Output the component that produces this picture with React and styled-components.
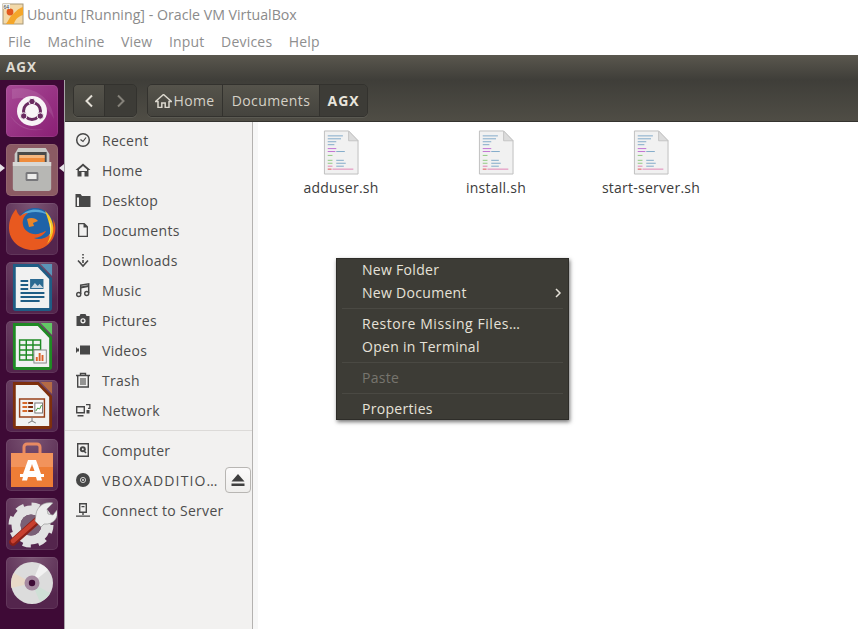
import styled, { createGlobalStyle } from "styled-components";

const Global = createGlobalStyle`
  html, body { margin: 0; padding: 0; background: #fff; }
  body { font-family: "Open Sans", "Noto Sans", sans-serif; }
  #root { width: 858px; height: 629px; overflow: hidden; }
`;

const Page = styled.div`
  width: 858px;
  height: 629px;
  display: flex;
  flex-direction: column;
  position: relative;
  overflow: hidden;
`;
const HostTitle = styled.div`
  height: 28px;
  display: flex;
  align-items: center;
  gap: 3px;
  padding-left: 2px;
  font: 14.2px "Open Sans", sans-serif;
  color: #8b8b8b;
  white-space: nowrap;
`;
const HostMenu = styled.div`
  height: 27px;
  display: flex;
  align-items: center;
  gap: 16.5px;
  padding-left: 8px;
  font: 14px "Open Sans", sans-serif;
  letter-spacing: 0.2px;
  color: #8e8e8e;
`;
const WindowBar = styled.div`
  height: 25px;
  display: flex;
  align-items: center;
  padding: 0 0 2px 6px;
  box-sizing: border-box;
  background: linear-gradient(#5a574e, #3f3e39);
  color: #dfdbd2;
  font: bold 13.5px "Open Sans", sans-serif;
  letter-spacing: 0.9px;
`;
const Body = styled.div`
  flex: 1;
  display: flex;
  min-height: 0;
`;
const Launcher = styled.div`
  width: 65px;
  flex: none;
  background: #3e0a36;
  border-right: 1px solid #a8a4a8;
  display: flex;
  flex-direction: column;
  align-items: flex-start;
  padding: 5px 0 0 6px;
  box-sizing: border-box;
  gap: 7px;
  position: relative;
`;
const Tile = styled.div`
  width: 52px;
  height: 52px;
  flex: none;
  border-radius: 5px;
  display: flex;
  align-items: center;
  justify-content: center;
  background: ${(p) => p.$bg || "radial-gradient(circle at 50% 0, #7b5574, #54254d 75%)"};
  box-shadow: inset 0 0 0 1px rgba(255, 255, 255, 0.08);
`;
const Pip = styled.div`
  position: absolute;
  top: 84px;
  width: 0;
  height: 0;
  border-top: 4px solid transparent;
  border-bottom: 4px solid transparent;
  ${(p) =>
    p.$right
      ? "left: 59px; border-right: 5px solid #e8e4e8;"
      : "left: 0; border-left: 5px solid #e8e4e8;"}
`;
const Main = styled.div`
  flex: 1;
  display: flex;
  flex-direction: column;
  min-width: 0;
`;
const Toolbar = styled.div`
  height: 42px;
  flex: none;
  box-sizing: border-box;
  display: flex;
  align-items: center;
  padding: 0 0 0 8px;
  gap: 10px;
  background: linear-gradient(#3f3e39, #4f4d45);
  border-bottom: 1px solid #34332f;
`;
const Group = styled.div`
  height: 33px;
  display: flex;
  border-radius: 5px;
  border: 1px solid #33322e;
  box-sizing: border-box;
  overflow: hidden;
  box-shadow: 0 1px 0 rgba(255, 255, 255, 0.08);
`;
const ToolButton = styled.div`
  display: flex;
  align-items: center;
  justify-content: center;
  gap: 1px;
  box-sizing: border-box;
  width: ${(p) => p.$w}px;
  color: ${(p) => (p.$active ? "#e9e5dc" : "#d5d1c7")};
  font: ${(p) => (p.$active ? "bold" : "normal")} 14px "Open Sans", sans-serif;
  letter-spacing: ${(p) => (p.$active ? "0.9px" : "0.4px")};
  background: ${(p) =>
    p.$flat ? "#3d3c37" : "linear-gradient(#55534b, #45443e)"};
  & + & {
    border-left: 1px solid #33322e;
  }
`;
const Panes = styled.div`
  flex: 1;
  display: flex;
  min-height: 0;
`;
const Sidebar = styled.div`
  width: 188px;
  flex: none;
  background: #f2f1f0;
  border-right: 1px solid #b4b2b0;
  box-sizing: border-box;
  padding-top: 3px;
`;
const SideRow = styled.div`
  height: 30px;
  display: flex;
  align-items: center;
  padding-left: 10px;
  gap: 11px;
  font: 14px "Open Sans", sans-serif;
  letter-spacing: 0.3px;
  color: #4c4c4c;
  white-space: nowrap;
`;
const WideLabel = styled.span`
  letter-spacing: 1.15px;
  margin-right: -5px;
`;
const SideDivider = styled.div`
  height: 1px;
  background: #dcdad8;
  margin: 5px 0 4px;
`;
const Eject = styled.div`
  width: 26px;
  height: 26px;
  flex: none;
  box-sizing: border-box;
  border: 1px solid #b8b6b3;
  border-radius: 4px;
  background: linear-gradient(#fbfafa, #efeeec);
  display: flex;
  align-items: center;
  justify-content: center;
`;
const Files = styled.div`
  flex: 1;
  background: #fff;
  display: flex;
  align-items: flex-start;
  padding: 8px 0 0 5.5px;
  border-left: 5px solid #f7f7f7;
`;
const FileItem = styled.div`
  width: 155px;
  display: flex;
  flex-direction: column;
  align-items: center;
  gap: 3px;
  font: 14px "Open Sans", sans-serif;
  letter-spacing: 0.25px;
  color: #3c3c3c;
`;
const ContextMenu = styled.div`
  position: absolute;
  left: 336px;
  top: 258px;
  width: 233px;
  height: 162px;
  box-sizing: border-box;
  background: #3d3c36;
  border: 1px solid #2e2d29;
  box-shadow: 1px 2px 4px rgba(0, 0, 0, 0.55);
`;
const MenuRow = styled.div`
  height: 23px;
  box-sizing: border-box;
  display: flex;
  align-items: center;
  justify-content: space-between;
  padding: 0 6px 2px 25px;
  font: 14px "Open Sans", sans-serif;
  letter-spacing: ${(p) => (p.$wide ? "0.55px" : "0.3px")};
  color: ${(p) => (p.$disabled ? "#77756e" : "#e6e2d9")};
`;
const MenuSep = styled.div`
  height: 1px;
  margin: 3px 5px 4px;
  background: #4a4943;
`;

const Glyph = ({ children, size = 16 }) => (
  <svg width={size} height={size} viewBox="0 0 16 16" fill="none" style={{ flex: "none" }}>
    {children}
  </svg>
);
const INK = "#474747";

const sideIcons = {
  recent: (
    <Glyph>
      <circle cx="8" cy="8" r="6.300" stroke={INK} strokeWidth="1.500" />
      <path d="M5.500 7.500 8 9.500l3-4" stroke={INK} strokeWidth="1.200" />
    </Glyph>
  ),
  home: (
    <Glyph>
      <path d="M8 1.500.5 8h2v6.500h4V10h3v4.500h4V8h2z" fill={INK} />
      <path d="M4 7.500 8 4l4 3.500v1.500H4z" fill="#f2f1f0" />
    </Glyph>
  ),
  desktop: (
    <Glyph>
      <path d="M.5 2h5l1.500 2h8.500v11H.5z" fill={INK} />
      <path d="M2 5.500h2V14H2z" fill="#f2f1f0" />
    </Glyph>
  ),
  documents: (
    <Glyph>
      <path d="M3 1h6.500L13 4.500V15H3z M4.300 2.300v11.400h7.400V5.500H8.500V2.300z" fill={INK} fillRule="evenodd" />
    </Glyph>
  ),
  downloads: (
    <Glyph>
      <path d="M8 2v1.500M8 5v1.500M8 8v3" stroke={INK} strokeWidth="1.600" />
      <path d="M3 8.500 8 14l5-5.500" stroke={INK} strokeWidth="1.600" />
    </Glyph>
  ),
  music: (
    <Glyph>
      <path d="M5.700 12V3.200l8-1.400V11" stroke={INK} strokeWidth="1.500" />
      <path d="M5.700 5.500l8-1.400" stroke={INK} strokeWidth="2" />
      <circle cx="3.700" cy="12.500" r="2" stroke={INK} strokeWidth="1.400" />
      <circle cx="11.700" cy="11.500" r="2" stroke={INK} strokeWidth="1.400" />
    </Glyph>
  ),
  pictures: (
    <Glyph>
      <path d="M1.500 4h3l1-2h5l1 2h3v10h-13z" fill={INK} />
      <circle cx="8" cy="8.800" r="2.600" fill="#f2f1f0" />
      <circle cx="8" cy="8.800" r="1.300" fill={INK} />
    </Glyph>
  ),
  videos: (
    <Glyph>
      <path d="M5 3.500h10v9H5zM1 5l3 3-3 3z" fill={INK} />
      <path d="M3.500 6.500v3" stroke={INK} />
    </Glyph>
  ),
  trash: (
    <Glyph>
      <path d="M1 3.500h14M5.500 3V1.500h5V3" stroke={INK} strokeWidth="1.400" />
      <path d="M2.700 4v11h10.600V4" stroke={INK} strokeWidth="1.400" />
      <path d="M6 6v7M8 6v7M10 6v7" stroke={INK} strokeWidth="1.100" />
    </Glyph>
  ),
  network: (
    <Glyph>
      <path d="M1 4h9v7.500H1z M2.400 5.400v4.700h6.200V5.400z" fill={INK} fillRule="evenodd" />
      <path d="M2.500 13h6v1.500h-6zM11 2h4.500v5H13V5.700h1.200V3.300H11zM11.500 8h3v3.500h-3z" fill={INK} />
    </Glyph>
  ),
  computer: (
    <Glyph>
      <path d="M2 1h12v14H2z M3.400 2.400v11.200h9.200V2.400z" fill={INK} fillRule="evenodd" />
      <circle cx="7.800" cy="7.300" r="3" fill={INK} />
      <path d="M8 8l3 3" stroke={INK} strokeWidth="1.600" />
      <circle cx="7.800" cy="7.300" r="1" fill="#f2f1f0" />
    </Glyph>
  ),
  disc: (
    <Glyph>
      <circle cx="8" cy="8" r="7" fill={INK} />
      <circle cx="8" cy="8" r="2.600" stroke="#f2f1f0" strokeWidth="0.800" />
      <circle cx="8" cy="8" r="0.900" fill="#f2f1f0" />
    </Glyph>
  ),
  server: (
    <Glyph>
      <path d="M4 1h8v10H4z M5.400 2.400v7.200h5.200V2.400z" fill={INK} fillRule="evenodd" />
      <path d="M6.500 4h3v1.300h-3zM7.300 11h1.400v2H7.300zM1 13.500h14v1.300H1z" fill={INK} />
    </Glyph>
  ),
};

const places = [
  ["recent", "Recent"],
  ["home", "Home"],
  ["desktop", "Desktop"],
  ["documents", "Documents"],
  ["downloads", "Downloads"],
  ["music", "Music"],
  ["pictures", "Pictures"],
  ["videos", "Videos"],
  ["trash", "Trash"],
  ["network", "Network"],
];

const VBoxLogo = () => (
  <svg width="22" height="22" viewBox="0 0 22 22" style={{ flex: "none" }}>
    <rect x="1" y="1" width="20" height="20" fill="#f3d9a8" stroke="#a89878" />
    <path d="M21 4C15 6 14 9 11 11 8 13 7 17 4 21h8c1-4 3-7 9-9z" fill="#f4a62a" />
    <circle cx="8" cy="9" r="3.400" fill="#e2581d" />
    <rect x="1" y="1" width="7" height="5" fill="#eee" />
    <text x="1.500" y="5.500" fontSize="5" fill="#444" fontFamily="Liberation Sans">64</text>
  </svg>
);

const DashIcon = () => (
  <svg width="52" height="52" viewBox="0 0 52 52">
    <path d="M6 4C24 0 46 10 48 34 40 18 24 10 6 14z" fill="#fff" opacity="0.1" />
    <path d="M4 30c6 12 20 18 34 14C24 46 12 42 4 30z" fill="#fff" opacity="0.12" />
    <circle cx="26" cy="26" r="15" fill="#f8f4f6" />
    <circle cx="26" cy="26" r="8.500" fill="none" stroke="#6a2a60" strokeWidth="3" />
    <circle cx="26" cy="16.500" r="3.200" fill="#6a2a60" stroke="#f8f4f6" />
    <circle cx="17.700" cy="31" r="3.200" fill="#6a2a60" stroke="#f8f4f6" />
    <circle cx="34.300" cy="31" r="3.200" fill="#6a2a60" stroke="#f8f4f6" />
  </svg>
);

const FilesIcon = () => (
  <svg width="42" height="46" viewBox="0 0 46 46" preserveAspectRatio="none">
    <path d="M8 1h30l4 6v34H4V7z" fill="#c9c9c6" />
    <rect x="7" y="5" width="32" height="14" fill="#4a4a48" />
    <rect x="9" y="8" width="28" height="3" fill="#f5b880" />
    <rect x="9" y="11" width="28" height="4" fill="#ef8c3c" />
    <path d="M2 15h42v26a3 3 0 0 1-3 3H5a3 3 0 0 1-3-3z" fill="#b7b7b4" />
    <path d="M2 15h42v4H2z" fill="#d8d8d5" />
    <rect x="16" y="25" width="14" height="9" rx="1.500" fill="#77777a" />
    <rect x="18" y="27" width="10" height="5" fill="#ededeb" />
  </svg>
);

const FirefoxIcon = () => (
  <svg width="50" height="50" viewBox="0 0 50 50">
    <circle cx="28" cy="22" r="18" fill="#1f63a8" />
    <path d="M14 12c6-8 20-9 27-1-8-4-18-4-27 1z" fill="#58a8d8" />
    <path d="M20 15c4-2 9-1 11 2l-5 2 1 3-5 1z" fill="#e8862a" />
    <path d="M9 5c1 3 2 5 4 7 3-2 5-3 8-3-4 3-6 7-5 12 1 6 8 10 15 9 4-1 7-3 8-3-2 4-7 7-12 7 4 2 12 1 16-4 4-5 4-11 3-15 3 5 3 12 1 17-3 8-11 14-21 14C12 46 2 36 2 24 2 16 5 10 9 5z" fill="#e8591f" />
    <path d="M38 7c7 6 9 14 8 21-1 5-3 9-6 12 3-6 4-11 3-16-1-6-3-12-5-17z" fill="#f9c623" />
    <path d="M42 16c2 6 2 12 0 17 3-5 3-12 0-17z" fill="#fff2a0" />
  </svg>
);

const DocIcon = ({ dark, light, children }) => (
  <svg width="42" height="50" viewBox="0 0 44 50" preserveAspectRatio="none">
    <path d="M2 1h27l14 14v30a3 3 0 0 1-3 3H5a3 3 0 0 1-3-3z" fill={dark} />
    <path d="M5 4h23l12 12v29H5z" fill="#f1f1f1" />
    <path d="M31 1h12v12z" fill={light} />
    {children}
  </svg>
);

const StoreIcon = () => (
  <svg width="44" height="46" viewBox="0 0 44 46">
    <path d="M14 11V5a3 3 0 0 1 3-3h10a3 3 0 0 1 3 3v6" fill="none" stroke="#e98a62" strokeWidth="3" />
    <path d="M1 11h42v34H1z" fill="#ee7d36" />
    <path d="M1 11h42v14H1z" fill="#f2935c" />
    <path d="M18 18h8l5 14H13zM22 22l-2.500 7h5z" fill="#fff" fillRule="evenodd" />
    <rect x="10" y="32" width="24" height="3" fill="#fff" />
    <path d="M13 35h5l-1 3.500h-5zM26 35h5l1 3.500h-5z" fill="#fff" />
  </svg>
);

const ToolsIcon = () => (
  <svg width="50" height="50" viewBox="0 0 50 50">
    <circle cx="24" cy="26" r="20" fill="none" stroke="#e0e0e0" strokeWidth="5" strokeDasharray="8 7.700" />
    <circle cx="24" cy="26" r="15" fill="none" stroke="#e2e2e2" strokeWidth="9" />
    <circle cx="24" cy="26" r="10.500" fill="#7a6076" />
    <path d="M6 43 33 19" stroke="#8a2018" strokeWidth="7.500" strokeLinecap="round" />
    <path d="M6 42 32 19" stroke="#c8402f" strokeWidth="4.500" strokeLinecap="round" />
    <path d="M29 15c1-7 8-13 17-11l-6 6 1 5 5 1 4-5c2 8-4 15-13 14l-3 3-6-6z" fill="#ededed" stroke="#8f8f8f" strokeWidth="0.600" />
  </svg>
);

const DiscIcon = () => (
  <svg width="44" height="44" viewBox="0 0 44 44">
    <circle cx="22" cy="22" r="21" fill="#dcdcdc" />
    <path d="M22 22 4 12A21 21 0 0 0 1.500 27z" fill="#e8d9c8" />
    <path d="M22 22 40 32A21 21 0 0 1 30 41z" fill="#cfe0d6" />
    <path d="M22 22 30 3A21 21 0 0 1 38 9z" fill="#f2f2f2" />
    <circle cx="22" cy="22" r="7.500" fill="#a589a0" />
    <circle cx="22" cy="22" r="3.200" fill="#3e0a36" />
  </svg>
);

const ShFile = () => (
  <svg width="36" height="45" viewBox="0 0 38 46" preserveAspectRatio="none">
    <path d="M1.500 1H27l10 10v34H1.500z" fill="#f1f1f1" stroke="#bdbdbd" />
    <path d="M27 1v10h10z" fill="#dcdcdc" stroke="#c4c4c4" />
    <path d="M5 6h16M5 9h14M5 12h9M5 15h7" stroke="#7fa9c8" />
    <path d="M5 19h9" stroke="#c070d2" />
    <path d="M5 22h8" stroke="#c070d2" />
    <path d="M14 22h9" stroke="#7fa9c8" />
    <path d="M5 26h5M5 31h5M5 34h5" stroke="#8fc97f" />
    <path d="M14 31h8M14 34h10M14 37h8" stroke="#7fa9c8" />
    <path d="M5 40h4" stroke="#e05050" />
    <path d="M5 37h5M10 40h22" stroke="#e080b4" />
  </svg>
);

const HomeGlyph = () => (
  <svg width="17" height="14" viewBox="0 0 17 14">
    <path d="M8.500.5.500 7.500h2.500v6h3.800V9h3.400v4.500H14v-6h2.500z" fill="none" stroke="#dcd8ce" strokeWidth="1.500" />
  </svg>
);

const Chevron = ({ dir, color }) => (
  <svg width="10" height="14" viewBox="0 0 10 14">
    <path d={dir === "left" ? "M8 1.500 2.500 7 8 12.500" : "M2 1.500 7.500 7 2 12.500"} fill="none" stroke={color} strokeWidth="2" />
  </svg>
);

const files = ["adduser.sh", "install.sh", "start-server.sh"];

export default function App() {
  return (
    <Page>
      <Global />
      <HostTitle>
        <VBoxLogo />
        Ubuntu [Running] - Oracle VM VirtualBox
      </HostTitle>
      <HostMenu>
        <span>File</span>
        <span>Machine</span>
        <span>View</span>
        <span>Input</span>
        <span>Devices</span>
        <span>Help</span>
      </HostMenu>
      <WindowBar>AGX</WindowBar>
      <Body>
        <Launcher>
          <Pip />
          <Pip $right />
          <Tile $bg="linear-gradient(135deg, #a84a96, #8a1f74)"><DashIcon /></Tile>
          <Tile $bg="#8b5a63"><FilesIcon /></Tile>
          <Tile><FirefoxIcon /></Tile>
          <Tile>
            <DocIcon dark="#1f5d85" light="#5b94b8">
              <path d="M10 18h8M10 22h8M10 26h8M10 30h25M10 34h25M10 38h20" stroke="#1f5d85" strokeWidth="2" />
              <rect x="20" y="16" width="14" height="10" fill="#2a6a92" />
              <path d="M21 25l4-5 3 3 2-2 4 4z" fill="#c9d6df" />
            </DocIcon>
          </Tile>
          <Tile>
            <DocIcon dark="#1f8a24" light="#62c765">
              <path d="M9 18h22v20H9zM9 23h22M9 28h22M9 33h22M16 18v20M23 18v20" fill="none" stroke="#1f8a24" strokeWidth="1.500" />
              <rect x="24" y="28" width="13" height="13" fill="#f4f4f4" stroke="#888" />
              <path d="M27 39v-4M30 39v-8M33 39v-6" stroke="#d9622b" strokeWidth="2" />
            </DocIcon>
          </Tile>
          <Tile>
            <DocIcon dark="#7e2f0c" light="#b46a45">
              <rect x="9" y="18" width="26" height="18" fill="#f4f4f4" stroke="#98401a" strokeWidth="1.500" />
              <path d="M12 22h5M12 26h5M12 30h5" stroke="#d66a2c" strokeWidth="2" />
              <path d="M18 22h5M18 26h5M18 30h5" stroke="#7e2f0c" strokeWidth="2" />
              <rect x="25" y="22" width="8" height="10" fill="#fff" stroke="#777" />
              <path d="M26 30l2-3 2 1 2-4" stroke="#3a9a3a" fill="none" />
              <path d="M22 36v4M18 42l4-2 4 2" stroke="#777" fill="none" />
            </DocIcon>
          </Tile>
          <Tile><StoreIcon /></Tile>
          <Tile><ToolsIcon /></Tile>
          <Tile><DiscIcon /></Tile>
        </Launcher>
        <Main>
          <Toolbar>
            <Group>
              <ToolButton $w={30}><Chevron dir="left" color="#e4e0d7" /></ToolButton>
              <ToolButton $w={32} $flat><Chevron dir="right" color="#85827a" /></ToolButton>
            </Group>
            <Group>
              <ToolButton $w={74}><HomeGlyph />Home</ToolButton>
              <ToolButton $w={97}>Documents</ToolButton>
              <ToolButton $w={48} $active $flat>AGX</ToolButton>
            </Group>
          </Toolbar>
          <Panes>
            <Sidebar>
              {places.map(([icon, label]) => (
                <SideRow key={label}>{sideIcons[icon]}{label}</SideRow>
              ))}
              <SideDivider />
              <SideRow>{sideIcons.computer}Computer</SideRow>
              <SideRow>
                {sideIcons.disc}<WideLabel>VBOXADDITIO…</WideLabel>
                <Eject>
                  <svg width="14" height="12" viewBox="0 0 14 12">
                    <path d="M7 0l6.500 7.500H.5zM.5 9.500h13V12H.5z" fill="#3f3f3f" />
                  </svg>
                </Eject>
              </SideRow>
              <SideRow>{sideIcons.server}Connect to Server</SideRow>
            </Sidebar>
            <Files>
              {files.map((name) => (
                <FileItem key={name}>
                  <ShFile />
                  {name}
                </FileItem>
              ))}
            </Files>
          </Panes>
        </Main>
      </Body>
      <ContextMenu>
        <MenuRow>New Folder</MenuRow>
        <MenuRow>
          New Document
          <svg width="8" height="10" viewBox="0 0 8 10">
            <path d="M2 1l4 4-4 4" fill="none" stroke="#e6e2d9" strokeWidth="1.500" />
          </svg>
        </MenuRow>
        <MenuSep />
        <MenuRow $wide>Restore Missing Files…</MenuRow>
        <MenuRow>Open in Terminal</MenuRow>
        <MenuSep />
        <MenuRow $disabled>Paste</MenuRow>
        <MenuSep />
        <MenuRow>Properties</MenuRow>
      </ContextMenu>
    </Page>
  );
}
